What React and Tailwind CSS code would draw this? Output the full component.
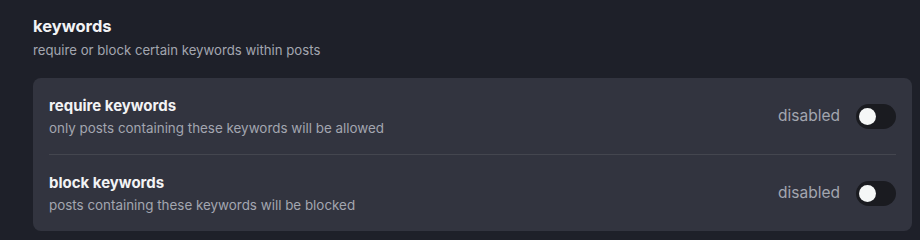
export default function App() {
  const rows = [
    { t: "require keywords", d: "only posts containing these keywords will be allowed" },
    { t: "block keywords", d: "posts containing these keywords will be blocked" },
  ];
  return (
    <div className="w-[920px] h-[240px] bg-[#1e2029] overflow-hidden pl-[33px] pr-[8px] pt-[12px] font-['Inter',sans-serif]">
      <div className="text-[16.5px] leading-[28px] font-bold text-[#f2f3f5]">keywords</div>
      <div className="text-[13.2px] leading-[20px] text-[#a3a6b0]">require or block certain keywords within posts</div>
      <div className="mt-[18px] bg-[#32343f] rounded-lg px-4">
        {rows.map((r, i) => (
          <div key={i} className={"flex items-center justify-between py-4 " + (i > 0 ? "border-t border-[#44464f]" : "")}>
            <div className="flex flex-col">
              <div className="text-[15px] leading-[24px] font-bold text-[#f2f3f5]">{r.t}</div>
              <div className="text-[13.4px] leading-[20px] text-[#a3a6b0]">{r.d}</div>
            </div>
            <div className="flex items-center gap-4">
              <span className="text-[15.5px] text-[#a3a6b0]">disabled</span>
              <div className="w-10 h-[25px] rounded-full bg-[#1a1b20] flex items-center pl-[3px]">
                <div className="w-[17px] h-[17px] rounded-full bg-[#f5f7f7]" />
              </div>
            </div>
          </div>
        ))}
      </div>
    </div>
  );
}
